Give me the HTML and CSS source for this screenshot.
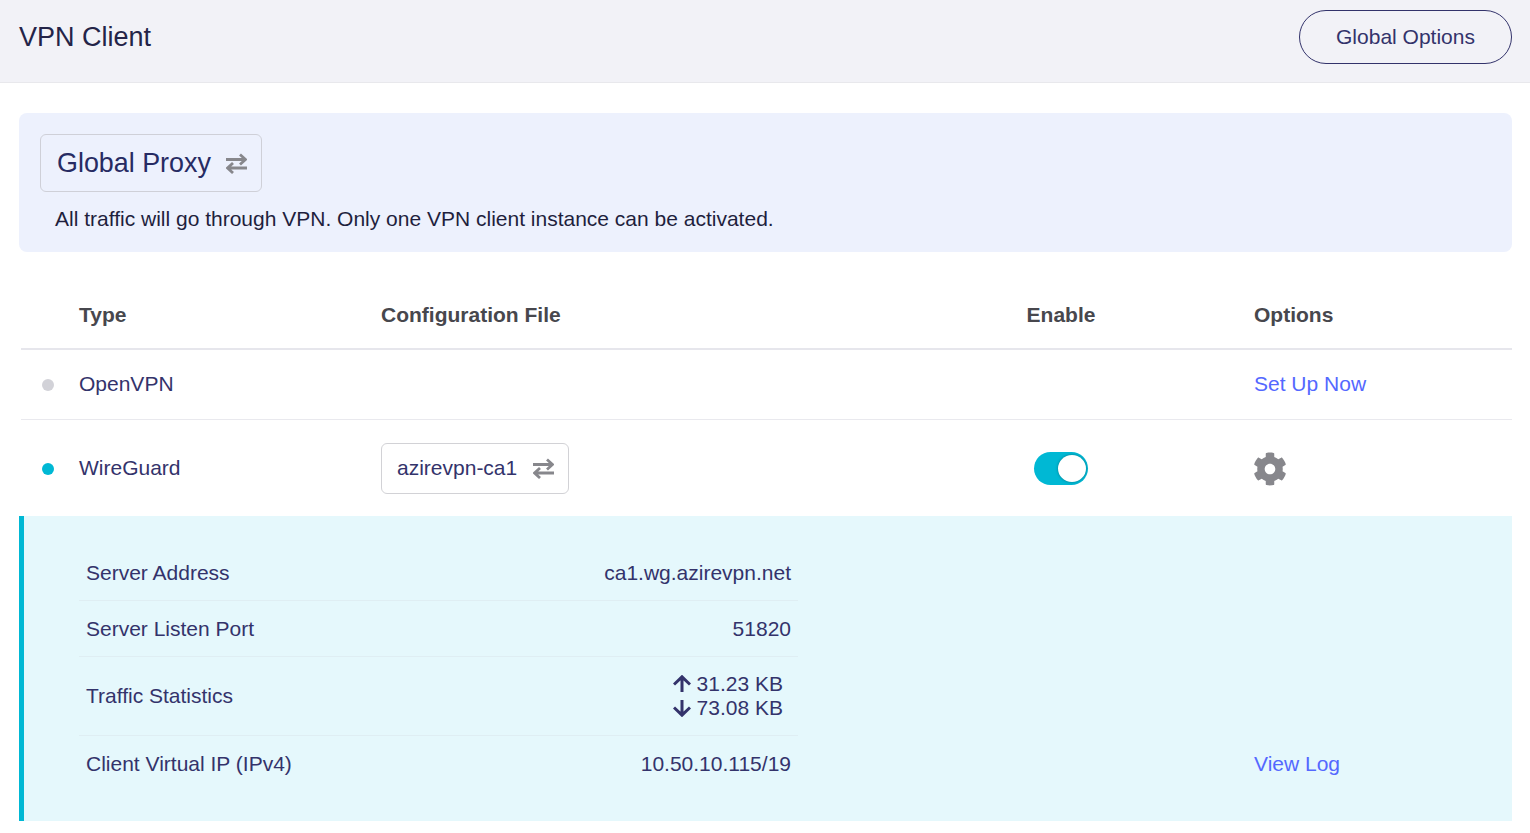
FILE: index.html
```html
<!DOCTYPE html>
<html lang="en">
<head>
<meta charset="utf-8">
<title>VPN Client</title>
<link rel="stylesheet" href="styles.css">
</head>
<body>
<header class="topbar">
  <h1 class="title">VPN Client</h1>
  <button class="outline-btn">Global Options</button>
</header>
<main class="content">
  <section class="banner">
    <div class="mode-select">
      <span>Global Proxy</span>
      <svg class="swap" viewBox="0 0 21 21"><path d="M0 6.5H19.5M14 1.5L19.5 6.5L14 11.5M21 15H1.5M7 10L1.5 15L7 20"/></svg>
    </div>
    <p class="banner-text">All traffic will go through VPN. Only one VPN client instance can be activated.</p>
  </section>

  <div class="vpn-table">
    <div class="row row-head">
      <div></div>
      <div>Type</div>
      <div>Configuration File</div>
      <div class="center">Enable</div>
      <div class="opt">Options</div>
    </div>
    <div class="row row-open">
      <div><span class="dot"></span></div>
      <div>OpenVPN</div>
      <div></div>
      <div></div>
      <div class="opt"><a class="link">Set Up Now</a></div>
    </div>
    <div class="row row-wg">
      <div><span class="dot dot-on"></span></div>
      <div>WireGuard</div>
      <div>
        <div class="config-select">
          <span>azirevpn-ca1</span>
          <svg class="swap" viewBox="0 0 21 21"><path d="M0 6.5H19.5M14 1.5L19.5 6.5L14 11.5M21 15H1.5M7 10L1.5 15L7 20"/></svg>
        </div>
      </div>
      <div class="center"><span class="toggle"><span class="knob"></span></span></div>
      <div class="opt">
        <svg class="gear" viewBox="0 0 512 512"><path d="M487.4 315.7l-42.6-24.6c4.3-23.2 4.3-47 0-70.2l42.6-24.6c4.9-2.8 7.1-8.6 5.5-14-11.1-35.6-30-67.8-54.7-94.6-3.8-4.1-10-5.1-14.8-2.3L380.8 110c-17.9-15.4-38.5-27.3-60.8-35.1V25.8c0-5.6-3.9-10.5-9.4-11.7-36.7-8.2-74.3-7.8-109.2 0-5.5 1.2-9.4 6.1-9.4 11.7V75c-22.2 7.9-42.8 19.8-60.8 35.1L88.7 85.5c-4.9-2.8-11-1.9-14.8 2.3-24.7 26.7-43.6 58.9-54.7 94.6-1.7 5.4.6 11.2 5.5 14L67.3 221c-4.3 23.2-4.3 47 0 70.2l-42.6 24.6c-4.9 2.8-7.1 8.6-5.5 14 11.1 35.6 30 67.8 54.7 94.6 3.8 4.1 10 5.1 14.8 2.3l42.6-24.6c17.9 15.4 38.5 27.3 60.8 35.1v49.2c0 5.6 3.9 10.5 9.4 11.7 36.7 8.2 74.3 7.8 109.2 0 5.5-1.2 9.4-6.1 9.4-11.7v-49.2c22.2-7.9 42.8-19.8 60.8-35.1l42.6 24.6c4.9 2.8 11 1.9 14.8-2.3 24.7-26.7 43.6-58.9 54.7-94.6 1.5-5.5-.7-11.3-5.6-14.1zM256 336c-44.1 0-80-35.9-80-80s35.9-80 80-80 80 35.9 80 80-35.9 80-80 80z"/></svg>
      </div>
    </div>
  </div>

  <section class="details">
    <div class="stats">
      <div class="stat"><span>Server Address</span><span>ca1.wg.azirevpn.net</span></div>
      <div class="stat"><span>Server Listen Port</span><span>51820</span></div>
      <div class="stat stat-traffic">
        <span>Traffic Statistics</span>
        <div class="traffic">
          <div class="traffic-line"><svg class="arrow" viewBox="0 0 18 18"><path d="M9 17V2M1 9.5L9 1.8L17 9.5"/></svg><span>31.23 KB</span></div>
          <div class="traffic-line"><svg class="arrow" viewBox="0 0 18 18"><path d="M9 1V16M1 8.5L9 16.2L17 8.5"/></svg><span>73.08 KB</span></div>
        </div>
      </div>
      <div class="stat stat-last"><span>Client Virtual IP (IPv4)</span><span>10.50.10.115/19</span></div>
    </div>
    <a class="link log-link">View Log</a>
  </section>
</main>
</body>
</html>
```
FILE: styles.css
```css
* { box-sizing: border-box; }
html, body { margin: 0; padding: 0; }
body {
  background: #fff;
  font-family: "Liberation Sans", Arial, sans-serif;
  font-size: 21px;
  color: #33336b;
  height: 833px;
  overflow: hidden;
}
.topbar {
  height: 83px;
  background: #f2f2f7;
  border-bottom: 1px solid #e8e8ec;
  display: flex;
  align-items: center;
  justify-content: space-between;
  padding: 10px 18px 18px 19px;
}
.title {
  margin: 0;
  font-size: 27px;
  font-weight: 400;
  color: #242448;
  line-height: 32px;
}
.outline-btn {
  width: 213px;
  height: 54px;
  border: 1px solid #33336b;
  border-radius: 27px;
  background: transparent;
  font: 21px "Liberation Sans", Arial, sans-serif;
  color: #33336b;
  padding: 0;
}
.content { padding: 30px 18px 0 19px; }
.banner {
  height: 139px;
  background: #edf1fd;
  border-radius: 8px;
  padding: 21px 21px 0;
}
.mode-select {
  width: 222px;
  height: 58px;
  border: 1px solid #cfd0d8;
  border-radius: 6px;
  display: flex;
  align-items: center;
  justify-content: space-between;
  padding: 0 14px 0 16px;
  font-size: 26.88px;
  color: #272b63;
}
.swap {
  width: 21px;
  height: 21px;
  fill: none;
  stroke: #87878c;
  stroke-width: 2.8;
  display: block;
  flex: none;
}
.banner-text {
  margin: 14px 0 0 15px;
  font-size: 21px;
  line-height: 26px;
  color: #1f1f3d;
}
.vpn-table { margin-left: 2px; }
.row {
  display: grid;
  grid-template-columns: 58px 302px 620px 120px 1fr;
  align-items: center;
}
.row-head {
  height: 98px;
  padding-top: 30px;
  font-weight: 700;
  color: #47474d;
  border-bottom: 2px solid #e6e6ec;
}
.row-open { height: 70px; padding-bottom: 1px; border-bottom: 1px solid #e9e9ee; }
.row-wg { height: 96px; }
.center { text-align: center; }
.opt { padding-left: 133px; }
.dot {
  display: block;
  width: 12px;
  height: 12px;
  border-radius: 50%;
  background: #d2d2d8;
  margin: 1px 0 0 21px;
}
.dot-on { background: #00b8d4; }
.link { color: #5468ff; }
.config-select {
  width: 188px;
  height: 51px;
  border: 1px solid #d2d2d6;
  border-radius: 6px;
  display: flex;
  align-items: center;
  justify-content: space-between;
  padding: 0 14px 0 15px;
}
.toggle {
  display: inline-block;
  vertical-align: middle;
  width: 54px;
  height: 33px;
  border-radius: 17px;
  background: #00b8d4;
  position: relative;
}
.knob {
  position: absolute;
  top: 3px;
  right: 2px;
  width: 28px;
  height: 27px;
  border-radius: 50%;
  background: #fff;
  box-shadow: 0 0 3px rgba(0,0,0,.35);
}
.gear { width: 34px; height: 34px; fill: #87878c; display: block; margin: 1px 0 0 -1px; }
.details {
  height: 305px;
  background: #e5f8fc;
  border-left: 5px solid #00b8d4;
  padding: 29px 0 0 55px;
  display: flex;
  align-items: flex-end;
}
.stats { width: 719px; margin-bottom: 29px; align-self: flex-start; }
.stat {
  height: 56px;
  padding: 0 7px;
  display: flex;
  align-items: center;
  justify-content: space-between;
  border-bottom: 1px solid #dfeef3;
}
.stat-traffic { height: 79px; }
.stat-last { border-bottom: none; }
.traffic { padding-right: 8px; line-height: 24px; }
.traffic-line { display: flex; align-items: center; gap: 6px; }
.arrow { width: 18px; height: 18px; fill: none; stroke: #33336b; stroke-width: 3; display: block; }
.log-link { margin: 0 0 45px 456px; }
```
